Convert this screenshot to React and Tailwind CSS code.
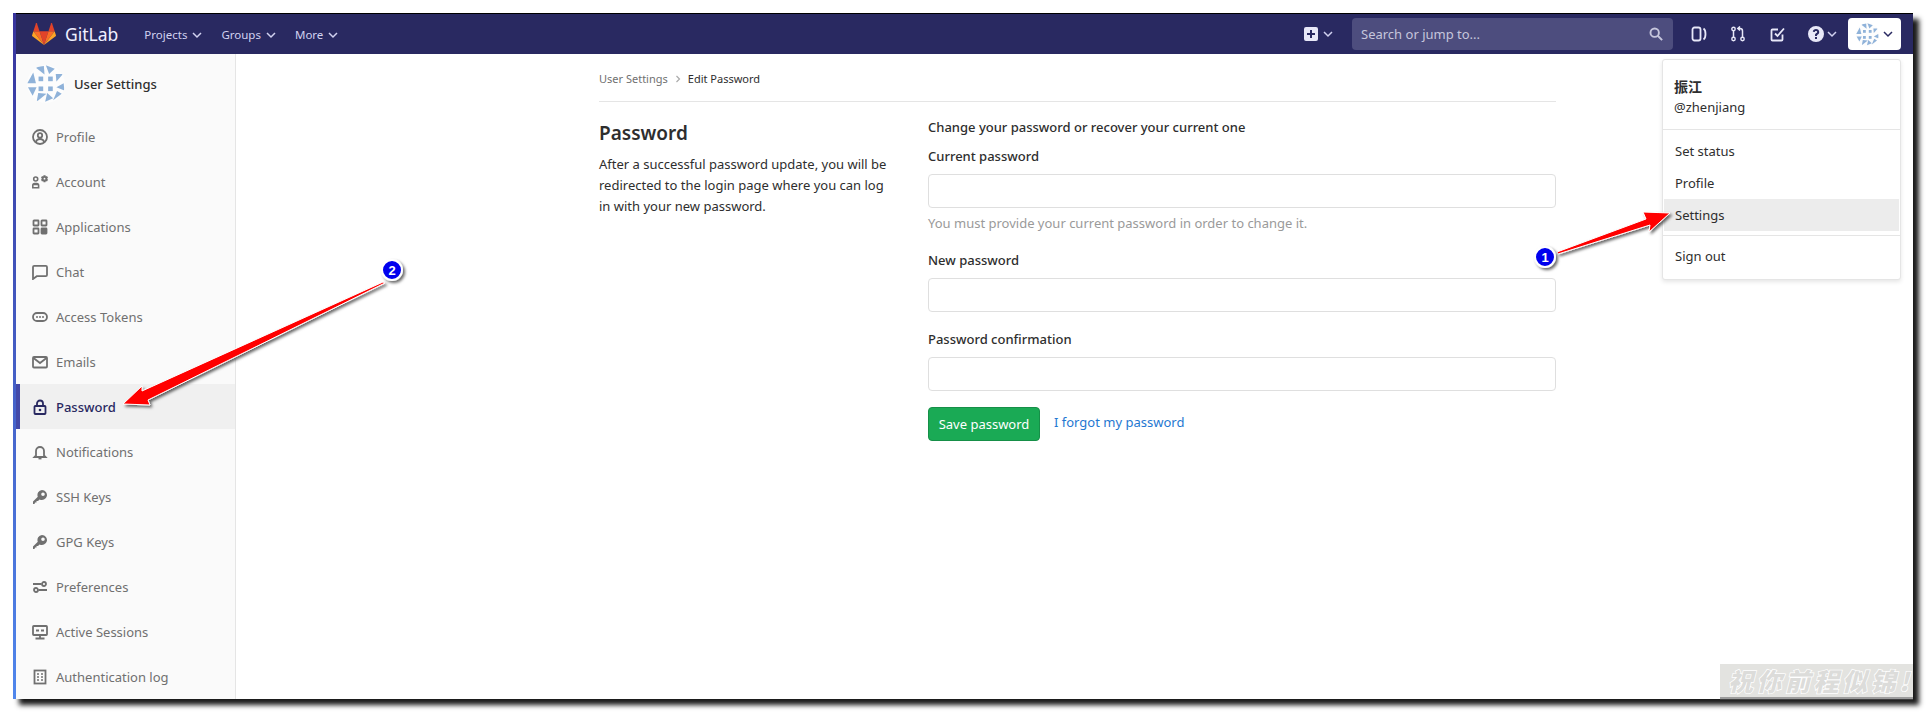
const font = { fontFamily: '"Noto Sans", "Noto Sans CJK SC", sans-serif' };

function Ico({ children, className = 'text-[#707070]', size = 16 }) {
  return (
    <svg width={size} height={size} viewBox="0 0 16 16" fill="none" stroke="currentColor" strokeWidth="1.8" className={`shrink-0 ${className}`}>
      {children}
    </svg>
  );
}

const sideIcons = {
  profile: (
    <>
      <circle cx="8" cy="8" r="7" />
      <circle cx="8" cy="6.400" r="2.200" />
      <path d="M3.800 13c.7-2 2.200-3 4.200-3s3.500 1 4.200 3" />
    </>
  ),
  account: (
    <>
      <circle cx="3.700" cy="5" r="2" strokeWidth="1.600" />
      <path fill="currentColor" stroke="none" fillRule="evenodd" d="M2.500 8.800h2.400c1.500 0 2.500 1 2.500 2.500v3.200H0v-3.200c0-1.500 1-2.500 2.500-2.500zm-.9 2.400v1.700h4.200v-1.700z" />
      <path fill="currentColor" stroke="none" d="M11.500 1.200h2l.3 1.300 1.200-.5 1 1.700-.9 1 .9 1-1 1.700-1.200-.5-.3 1.300h-2l-.3-1.300-1.200.5-1-1.700.9-1-.9-1 1-1.700 1.200.5z" />
      <circle cx="12.500" cy="4.700" r=".9" fill="#fafafa" stroke="none" />
    </>
  ),
  apps: (
    <>
      <rect x="1.500" y="1.500" width="5" height="5" rx=".5" />
      <rect x="9.500" y="1.500" width="5" height="5" rx=".5" />
      <rect x="1.500" y="9.500" width="5" height="5" rx=".5" />
      <rect x="9.500" y="9.500" width="5" height="5" rx=".5" fill="currentColor" />
    </>
  ),
  chat: <path d="M1 3c0-.8.6-1.200 1.200-1.200h11.600c.6 0 1.200.4 1.200 1.200v8c0 .6-.6 1.200-1.200 1.200H4.800L1 15z" />,
  token: (
    <>
      <rect x="1" y="4" width="14" height="8" rx="4" />
      <circle cx="5" cy="8" r="1" fill="currentColor" stroke="none" />
      <circle cx="8" cy="8" r="1" fill="currentColor" stroke="none" />
      <circle cx="11" cy="8" r="1" fill="currentColor" stroke="none" />
    </>
  ),
  mail: (
    <>
      <rect x="1" y="3" width="14" height="10.500" rx="1" />
      <path d="M1.500 4l6.500 5 6.500-5" />
    </>
  ),
  lock: (
    <>
      <path d="M5 7V4.500a3 3 0 0 1 6 0V7" />
      <rect x="2.500" y="7" width="11" height="8" rx=".8" />
      <circle cx="8" cy="11" r="1.300" fill="currentColor" stroke="none" />
    </>
  ),
  bell: (
    <>
      <path d="M4 11.500V7a4 4 0 0 1 8 0v4.500l1.500 1.500h-11z" />
      <path d="M6.500 14.500h3" />
    </>
  ),
  key: (
    <path
      fill="currentColor"
      stroke="none"
      fillRule="evenodd"
      d="M10 1a5 5 0 1 1-2.400 9.400L6 12H4.500v1.500H3L2.500 15H1v-2.500l4.800-4.700A5 5 0 0 1 10 1zm1 2.500a1.800 1.800 0 1 0 0 3.600 1.800 1.800 0 0 0 0-3.600z"
    />
  ),
  prefs: (
    <>
      <path d="M1 5h8.500M6.500 11H15" />
      <circle cx="12" cy="5" r="2" />
      <circle cx="4" cy="11" r="2" />
    </>
  ),
  session: (
    <>
      <rect x="1" y="2" width="14" height="9" rx=".8" />
      <path d="M4 6.500h3M9 6.500h3M8 11v3M3.500 14.500h9" />
    </>
  ),
  log: (
    <>
      <rect x="2.500" y="1.500" width="11" height="13" />
      <path strokeWidth="1.300" d="M5 5h2M9 5h2M5 8h2M9 8h2M5 11h2M9 11h2" />
    </>
  ),
};

const sideItems = [
  ['Profile', 'profile'],
  ['Account', 'account'],
  ['Applications', 'apps'],
  ['Chat', 'chat'],
  ['Access Tokens', 'token'],
  ['Emails', 'mail'],
  ['Password', 'lock', true],
  ['Notifications', 'bell'],
  ['SSH Keys', 'key'],
  ['GPG Keys', 'key'],
  ['Preferences', 'prefs'],
  ['Active Sessions', 'session'],
  ['Authentication log', 'log'],
];

function Chevron({ className = 'text-[#d1d1f0]' }) {
  return (
    <svg width="12" height="12" viewBox="0 0 12 12" fill="none" stroke="currentColor" strokeWidth="1.500" className={className}>
      <path d="M2 4l4 4 4-4" />
    </svg>
  );
}

function Avatar({ size }) {
  return (
    <svg width={size} height={size} viewBox="81 195 115 115" className="shrink-0 rounded-full bg-[#fdfdfd]">
      <g fill="#8fb2d9">
        <polygon points="138,196 165,206 148,222" />
        <polygon points="106,202 132,198 134,224" />
        <polygon points="168,222 190,222 170,245" />
        <polygon points="100,218 108,250 82,250" />
        <polygon points="192,250 194,272 170,262" />
        <polygon points="84,262 110,262 98,288" />
        <polygon points="172,274 186,282 160,302" />
        <polygon points="115,280 140,282 110,306" />
        <polygon points="142,280 160,296 136,306" />
        <rect x="116" y="230" width="14" height="14" />
        <rect x="145" y="230" width="14" height="14" />
        <rect x="116" y="260" width="14" height="14" />
        <rect x="145" y="260" width="14" height="14" />
      </g>
    </svg>
  );
}

function Logo() {
  return (
    <svg width="24" height="24" viewBox="0 0 36 34" className="shrink-0">
      <path fill="#E24329" d="M18 33.500L24.700 13H11.300z" />
      <path fill="#FC6D26" d="M18 33.500L11.300 13H2z" />
      <path fill="#FCA326" d="M2 13L.1 19c-.2.500 0 1.100.500 1.500L18 33.500z" />
      <path fill="#E24329" d="M2 13h9.300L7.300.8c-.2-.6-1.100-.6-1.300 0z" />
      <path fill="#FC6D26" d="M18 33.500L24.700 13H34z" />
      <path fill="#FCA326" d="M34 13l1.900 6c.2.500 0 1.100-.5 1.500L18 33.500z" />
      <path fill="#E24329" d="M34 13h-9.300L28.700.8c.2-.6 1.100-.6 1.300 0z" />
    </svg>
  );
}

function TopNav() {
  const light = 'text-[#d1d1f0]';
  return (
    <header className="flex h-[41px] shrink-0 items-center border-t border-black bg-[#292961] pl-[16px] pr-[12px]">
      <Logo />
      <span className="ml-[9px] pt-[1px] text-[17.5px] leading-none text-[#f0f0ff]">GitLab</span>
      <nav className={`ml-[26px] flex items-center gap-[18px] pt-[1px] text-[11.5px] ${light}`}>
        <span className="flex items-center gap-[4px]">Projects <Chevron /></span>
        <span className="flex items-center gap-[4px]">Groups <Chevron /></span>
        <span className="flex items-center gap-[4px]">More <Chevron /></span>
      </nav>
      <div className={`ml-auto flex items-center ${light}`}>
        <svg width="14" height="14" viewBox="0 0 14 14" className="text-[#e8e8f8]">
          <path fill="currentColor" fillRule="evenodd" d="M2 0h10a2 2 0 0 1 2 2v10a2 2 0 0 1-2 2H2a2 2 0 0 1-2-2V2a2 2 0 0 1 2-2zm4 3v3H3v2h3v3h2V8h3V6H8V3z" />
        </svg>
        <span className="ml-[4px]"><Chevron /></span>
        <div className="ml-[18px] flex h-[32px] w-[321px] items-center justify-between rounded-[4px] bg-[#4d4d7e] pl-[9px] pr-[10px] text-[13px] text-[#c6c6dc]">
          <span className="pt-[1px]">Search or jump to...</span>
          <svg width="14" height="14" viewBox="0 0 16 16" fill="none" stroke="currentColor" strokeWidth="2.200">
            <circle cx="6.500" cy="6.500" r="4.800" />
            <path d="M10 10l5 5" />
          </svg>
        </div>
        <div className="ml-[18px] flex items-center gap-[23px] text-[#e8e8f8]">
          <Ico className="">
            <rect x="1.500" y="1.500" width="8" height="13" rx="2" />
            <path d="M12.500 2.500c1.500 1 2 3 2 5.500s-.5 4.500-2 5.500" />
          </Ico>
          <Ico className="">
            <circle cx="3.500" cy="3" r="1.700" strokeWidth="1.400" />
            <circle cx="3.500" cy="13" r="1.700" strokeWidth="1.400" />
            <circle cx="12.500" cy="13" r="1.700" strokeWidth="1.400" />
            <path strokeWidth="1.500" d="M3.500 5v6M12.500 11V5c0-1.500-1-2.500-2.500-2.500H8M10 .5L7.800 2.500 10 4.500" />
          </Ico>
          <Ico className="">
            <path d="M13.500 8.500v5a1 1 0 0 1-1 1h-9a1 1 0 0 1-1-1v-9a1 1 0 0 1 1-1H9" />
            <path d="M6 7.500l2.500 2.500L15 2.500" />
          </Ico>
          <span className="flex items-center gap-[2px]">
            <svg width="16" height="16" viewBox="0 0 16 16">
              <path fill="currentColor" fillRule="evenodd" d="M8 0a8 8 0 1 1 0 16A8 8 0 0 1 8 0zM7 11v2h2v-2zM8 3C6.300 3 5 4 4.800 5.700l1.900.3C6.800 5.300 7.300 4.900 8 4.900c.7 0 1.200.4 1.200 1 0 .5-.3.800-.9 1.200C7.400 7.700 7 8.300 7 9.500V10h2v-.3c0-.6.200-.9.900-1.300.9-.6 1.300-1.300 1.300-2.500C11.200 4.200 9.900 3 8 3z" />
            </svg>
            <Chevron />
          </span>
        </div>
        <div className="ml-[10px] flex h-[32px] w-[53px] items-center justify-between rounded-[4px] bg-white pl-[8px] pr-[7px]">
          <Avatar size={23} />
          <Chevron className="text-[#292961]" />
        </div>
      </div>
    </header>
  );
}

function Sidebar() {
  return (
    <aside className="h-full w-[220px] shrink-0 border-r border-[#e5e5e5] bg-[#fafafa]">
      <div className="flex h-[60px] items-center gap-[9px] pl-[11px] text-[13px] font-medium text-[#2e2e2e]">
        <Avatar size={38} />
        <span className="pt-[2px]">User Settings</span>
      </div>
      {sideItems.map(([label, icon, active]) => (
        <div
          key={label}
          className={`flex h-[45px] items-center gap-[8px] text-[13px] ${
            active ? 'border-l-4 border-[#4349a8] bg-[#f0f0f0] pl-[12px] font-medium text-[#292961]' : 'pl-[16px] text-[#707070]'
          }`}
        >
          <Ico className={active ? 'text-[#292961]' : 'text-[#707070]'}>{sideIcons[icon]}</Ico>
          <span className="pt-[2px]">{label}</span>
        </div>
      ))}
    </aside>
  );
}

function Field({ label, hint, className = '' }) {
  return (
    <div className={className}>
      <label className="block text-[13px] font-medium leading-[20px] text-[#2e2e2e]">{label}</label>
      <input type="password" className="mt-[8px] block h-[34px] w-full rounded-[4px] border border-[#dfdfdf] bg-white" />
      {hint && <p className="mt-[5px] text-[13px] leading-[20px] text-[#9a9a9a]">{hint}</p>}
    </div>
  );
}

function Main() {
  return (
    <main className="min-w-0 flex-1 bg-white">
      <div className="ml-[363px] w-[957px]">
        <div className="flex h-[48px] items-center gap-[5px] border-b border-[#e5e5e5] pt-[3px] text-[11px]">
          <span className="text-[#707070]">User Settings</span>
          <svg width="10" height="10" viewBox="0 0 10 10" fill="none" stroke="#aaa" strokeWidth="1.200"><path d="M3.500 2l3 3-3 3" /></svg>
          <span className="text-[#2e2e2e]">Edit Password</span>
        </div>
        <div className="flex">
          <div className="w-[329px] shrink-0 pr-[36px]">
            <h4 className="mt-[17px] text-[19px] font-semibold leading-[28px] text-[#2e2e2e]">Password</h4>
            <p className="mt-[7px] text-[13px] leading-[21px] text-[#2e2e2e]">
              After a successful password update, you will be redirected to the login page where you can log in with your new password.
            </p>
          </div>
          <div className="flex-1">
            <p className="mt-[15px] text-[13px] font-medium leading-[20px] text-[#2e2e2e]">Change your password or recover your current one</p>
            <Field className="mt-[9px]" label="Current password" hint="You must provide your current password in order to change it." />
            <Field className="mt-[17px]" label="New password" />
            <Field className="mt-[17px]" label="Password confirmation" />
            <div className="mt-[16px] flex items-start gap-[14px]">
              <button className="h-[34px] w-[112px] rounded-[4px] border border-[#168f48] bg-[#1aaa55] pt-[1px] text-[13px] text-white">Save password</button>
              <a className="mt-[5px] text-[13px] leading-[20px] text-[#1f78d1]">I forgot my password</a>
            </div>
          </div>
        </div>
      </div>
    </main>
  );
}

function UserMenu() {
  const item = 'flex h-[32px] items-center pl-[12px] pt-[2px] text-[13px] text-[#2e2e2e]';
  return (
    <div className="absolute left-[1662px] top-[59px] w-[239px] rounded-[3px] border border-[#e5e5e5] bg-white shadow-[0_2px_4px_rgba(0,0,0,0.1)]">
      <div className="h-[69px] pl-[11px] pt-[16px] text-[13px] leading-[21px] text-[#2e2e2e]">
        <div className="text-[14px] font-semibold">振江</div>
        <div>@zhenjiang</div>
      </div>
      <div className="border-t border-[#e5e5e5] pb-[4px] pt-[5px]">
        <div className={item}>Set status</div>
        <div className={item}>Profile</div>
        <div className={`${item} mx-[1px] bg-[#ececec] !pl-[11px]`}>Settings</div>
      </div>
      <div className="border-t border-[#e5e5e5] pb-[7px] pt-[4px]">
        <div className={item}>Sign out</div>
      </div>
    </div>
  );
}

function Annotations() {
  return (
    <svg width="1927" height="713" viewBox="0 0 1927 713" className="pointer-events-none absolute left-0 top-0">
      <defs>
        <filter id="sh" x="-20%" y="-20%" width="140%" height="140%">
          <feDropShadow dx="2" dy="2" stdDeviation="1.500" floodColor="#000" floodOpacity="0.6" />
        </filter>
      </defs>
      <g filter="url(#sh)" stroke="#fff" strokeWidth="1" strokeLinejoin="round">
        <polygon fill="#f00" points="1557,252 1646,219 1643,212 1670,213 1649,232 1650,225 1558,254" />
        <polygon fill="#f00" points="383,282 385,283 148,400 150,405 123,404 142,386 142,391" />
      </g>
      <g filter="url(#sh)">
        <circle cx="1545" cy="257" r="10" fill="#0000ee" stroke="#fff" strokeWidth="2" />
        <circle cx="392" cy="270" r="10" fill="#0000ee" stroke="#fff" strokeWidth="2" />
      </g>
      <text x="1545" y="262" textAnchor="middle" fill="#fff" fontSize="13" fontWeight="700" fontFamily="Liberation Sans">1</text>
      <text x="392" y="275" textAnchor="middle" fill="#fff" fontSize="13" fontWeight="700" fontFamily="Liberation Sans">2</text>
    </svg>
  );
}

export default function App() {
  return (
    <div className="relative h-[713px] w-[1927px] overflow-hidden bg-white pl-[13px] pt-[13px]" style={font}>
      <div className="flex h-[686px] w-[1900px] flex-col bg-white shadow-[6px_6px_5px_rgba(0,0,0,0.9)]">
        <div className="flex h-full min-h-0">
          <div className="w-[3px] shrink-0 bg-gradient-to-b from-[#37339c] to-[#4f86ec]" />
          <div className="flex min-w-0 flex-1 flex-col">
            <TopNav />
            <div className="flex min-h-0 flex-1">
              <Sidebar />
              <Main />
            </div>
          </div>
        </div>
      </div>
      <UserMenu />
      <Annotations />
      <div className="absolute left-[1720px] top-[664px] flex h-[33px] w-[193px] items-center whitespace-nowrap bg-[#e3e3e0] pl-[8px] text-[25px] font-black italic leading-none tracking-[3.500px] text-[#dcdcda] shadow-[0_3px_0_rgba(90,90,90,0.6)] [-webkit-text-stroke:1.500px_#ffffff] [paint-order:stroke_fill]" style={{ fontFamily: '"Noto Sans CJK SC", sans-serif' }}>
        祝你前程似锦!
      </div>
    </div>
  );
}
